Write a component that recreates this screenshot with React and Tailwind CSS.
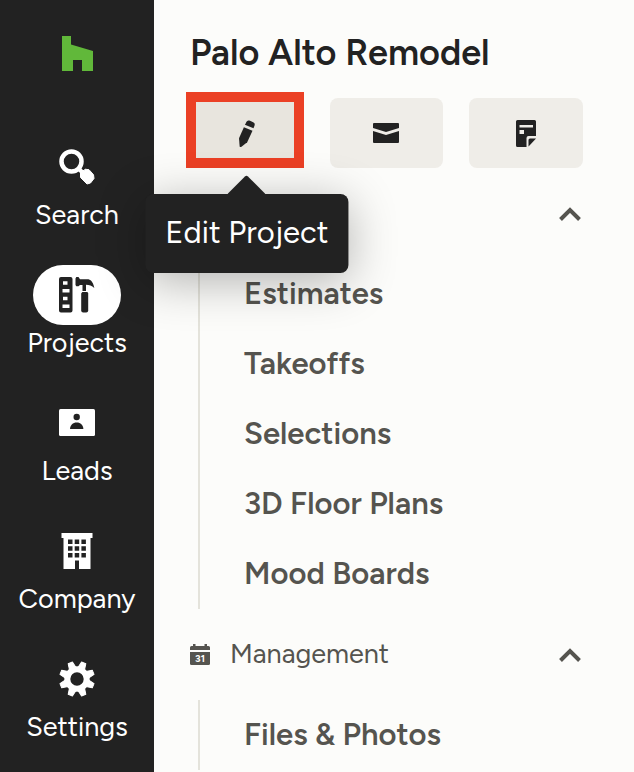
import clsx from 'clsx';

const LogoIcon = () => (
  <svg width="31" height="35" viewBox="0 0 31 35" fill="#61b83a" aria-hidden="true">
    <path d="M0 0h9v8.500l22 6.500V35H20V24h-9v11H0z" />
  </svg>
);

const SearchIcon = () => (
  <svg width="36" height="36" viewBox="0 0 36 36" aria-hidden="true">
    <circle cx="12.500" cy="12.500" r="10" fill="none" stroke="currentColor" strokeWidth="4.500" />
    <path d="M19.500 19.500l4 4" stroke="currentColor" strokeWidth="4" />
    <path
      d="M21.500 24l.5-2.500h3l1-1.300 4 .5 4.500 5 .5 3.800-3.500 4.500-3.500 1-6.500-6.500z"
      fill="currentColor"
      stroke="currentColor"
      strokeLinejoin="round"
    />
  </svg>
);

const ProjectsIcon = () => (
  <svg width="36" height="36" viewBox="0 0 36 36" fill="currentColor" aria-hidden="true">
    <path
      fillRule="evenodd"
      d="M2 0h9.500a2 2 0 0 1 2 2v31.500a2 2 0 0 1-2 2H2a2 2 0 0 1-2-2V2a2 2 0 0 1 2-2zM4 4.200v3.600h4.500V4.200zM3.500 12v3.500h7V12zM4 19.800v3.400h4.500v-3.400zM3.500 27.500v3.500h7v-3.500z"
    />
    <path d="M16.500 1.500l.8-1.500h2.200l1.500 2.200h8.500c3 .8 5 4 5.800 8.800-2.500-2-5-3.200-8.300-3.200V14h-3.500V8h-2.500l-1.500 1.200h-2.200l-.8-1.200z" />
    <path d="M23.300 15h5.200l.7 1.500v17a2 2 0 0 1-2 2h-3a2 2 0 0 1-2-2v-17z" />
  </svg>
);

const LeadsIcon = () => (
  <svg width="36" height="36" viewBox="0 0 36 36" aria-hidden="true">
    <rect y="4" width="36" height="27" rx="1.500" fill="currentColor" />
    <circle cx="17.700" cy="12" r="3.200" fill="#222222" />
    <path d="M11 24c.3-4 2.800-6.500 6.700-6.500s6.400 2.500 6.700 6.500z" fill="#222222" />
  </svg>
);

const CompanyIcon = () => (
  <svg width="36" height="36" viewBox="0 0 36 36" fill="currentColor" aria-hidden="true">
    <path
      fillRule="evenodd"
      d="M2.500 0h31v5h-2v31H20v-8.500h-4V36H4.500V5h-2zM9 6.500v4.500h4.500V6.500zM15.700 6.500v4.500h4.500V6.500zM22.400 6.500v4.500h4.500V6.500zM9 13.200v4.500h4.500v-4.500zM15.700 13.200v4.500h4.500v-4.500zM22.400 13.200v4.500h4.500v-4.500zM9 20v4.500h4.500V20zM15.700 20v4.500h4.500V20zM22.400 20v4.500h4.500V20z"
    />
  </svg>
);

const SettingsIcon = () => (
  <svg width="36" height="36" viewBox="-18 -18 36 36" aria-hidden="true">
    <circle r="9.700" fill="none" stroke="currentColor" strokeWidth="6" />
    <g fill="currentColor" stroke="currentColor" strokeLinejoin="round">
      {[22.5, 67.5, 112.5, 157.5, 202.5, 247.5, 292.5, 337.5].map((angle) => (
        <path key={angle} d="M-3.500-11l1.200-6.500h4.600L3.500-11z" transform={`rotate(${angle})`} />
      ))}
    </g>
  </svg>
);

const PencilIcon = () => (
  <svg width="26" height="28" viewBox="0 0 26 28" fill="currentColor" aria-hidden="true">
    <path d="M11.800 4.200c.9-2.500 2.200-3.200 4.200-2.400l2.700 1.100c2 .8 2.500 2 1.700 4l-.9 2.300-8.600-3.400z" />
    <path d="M9.900 8.200l8.600 3.500-5.300 11.500-6.300 5-1.200-.5-.7-8.500z" />
  </svg>
);

const MailIcon = () => (
  <svg width="26" height="20" viewBox="0 0 26 20" fill="currentColor" aria-hidden="true">
    <path d="M1 0h24a1 1 0 0 1 1 1v4L13 9 0 5V1a1 1 0 0 1 1-1z" />
    <path d="M0 8l13 4 13-4v11a1 1 0 0 1-1 1H1a1 1 0 0 1-1-1z" />
  </svg>
);

const NoteIcon = () => (
  <svg width="20" height="27" viewBox="0 0 20 27" fill="currentColor" aria-hidden="true">
    <path
      fillRule="evenodd"
      d="M1.500 0h17A1.500 1.500 0 0 1 20 1.500V16h-7.500a2 2 0 0 0-2 2v9h-9A1.500 1.500 0 0 1 0 25.500v-24A1.500 1.500 0 0 1 1.500 0zM3.500 5v2.500h13.500V5zM3.500 10v4H8v-4z"
    />
    <path d="M12.500 26.500V20a1.500 1.500 0 0 1 1.500-1.500h6z" />
  </svg>
);

const CalendarIcon = () => (
  <svg width="20" height="21" viewBox="0 0 20 21" fill="currentColor" aria-hidden="true">
    <path d="M1.500 2H3V0h2.500v2h9V0H17v2h1.500A1.500 1.500 0 0 1 20 3.500V6H0V3.500A1.500 1.500 0 0 1 1.500 2z" />
    <path d="M0 8h20v11.500a1.500 1.500 0 0 1-1.500 1.500h-17A1.500 1.500 0 0 1 0 19.500z" />
    <text x="10" y="18" textAnchor="middle" fontSize="10" fontWeight="700" fill="#fcfcfa">
      31
    </text>
  </svg>
);

const ChevronUpIcon = () => (
  <svg width="24" height="16" viewBox="0 0 24 16" fill="none" aria-hidden="true">
    <path d="M1.500 13.500l9.500-9.500 9.500 9.500" stroke="currentColor" strokeWidth="4" />
  </svg>
);

const navItems = [
  { label: 'Search', Icon: SearchIcon },
  { label: 'Projects', Icon: ProjectsIcon, active: true },
  { label: 'Leads', Icon: LeadsIcon },
  { label: 'Company', Icon: CompanyIcon },
  { label: 'Settings', Icon: SettingsIcon },
];

const planningLinks = ['Estimates', 'Takeoffs', 'Selections', '3D Floor Plans', 'Mood Boards'];
const managementLinks = ['Files & Photos'];

const Sidebar = () => (
  <nav className="flex w-[154px] shrink-0 flex-col items-center bg-[#222222] pt-9 text-white">
    <a href="#home" aria-label="Home">
      <LogoIcon />
    </a>
    <ul className="mt-[66px] flex flex-col gap-8">
      {navItems.map(({ label, Icon, active }) => (
        <li key={label}>
          <a href={`#${label.toLowerCase()}`} className="flex w-[118px] flex-col items-center">
            <span
              className={clsx(
                'flex h-[60px] w-[88px] items-center justify-center rounded-full',
                active && 'bg-white text-[#222222]'
              )}
            >
              <Icon />
            </span>
            <span className="text-[27px] leading-9">{label}</span>
          </a>
        </li>
      ))}
    </ul>
  </nav>
);

const ActionButton = ({ label, selected, children }) => (
  <button
    type="button"
    aria-label={label}
    className={clsx(
      'flex h-[70px] w-full items-center justify-center rounded-lg',
      selected ? 'bg-[#e8e5de]' : 'bg-[#efede8]'
    )}
  >
    {children}
  </button>
);

const Tooltip = ({ children }) => (
  <div
    role="tooltip"
    className="absolute top-24 left-1/2 z-10 flex h-[79px] -translate-x-1/2 items-center rounded-lg bg-[#222222] px-5 text-[31px] whitespace-nowrap text-white shadow-[0_8px_48px_rgba(0,0,0,0.3)]"
  >
    <svg
      width="38"
      height="19"
      viewBox="0 0 38 19"
      fill="#222222"
      className="absolute bottom-full left-1/2 -translate-x-1/2"
      aria-hidden="true"
    >
      <path d="M0 19L17.500 1.500q1.500-1.500 3 0L38 19z" />
    </svg>
    {children}
  </div>
);

const LinkList = ({ links }) => (
  <ul className="ml-2 border-l-2 border-[#e4e3db]">
    {links.map((link) => (
      <li key={link}>
        <a href="#section" className="flex h-[70px] items-center pl-11 text-[31px] font-semibold">
          {link}
        </a>
      </li>
    ))}
  </ul>
);

export default function App() {
  return (
    <div className="flex h-screen overflow-hidden bg-[#fcfcfa] font-['Figtree','Inter',sans-serif]">
      <Sidebar />
      <main className="min-w-0 flex-1 pt-2 pr-[51px] pl-9 text-[#55544f]">
        <h1 className="flex h-[90px] items-center text-[36px] font-semibold whitespace-nowrap text-[#222222]">
          Palo Alto Remodel
        </h1>

        <div className="grid grid-cols-3 gap-[26px] text-[#222222]">
          <div className="relative">
            <ActionButton label="Edit Project" selected>
              <PencilIcon />
            </ActionButton>
            <div className="pointer-events-none absolute -top-1.5 right-0 bottom-0 -left-1 border-10 border-[#eb4025]" />
            <Tooltip>Edit Project</Tooltip>
          </div>
          <ActionButton label="Messages">
            <MailIcon />
          </ActionButton>
          <ActionButton label="Notes">
            <NoteIcon />
          </ActionButton>
        </div>

        <section>
          <button type="button" aria-label="Collapse planning" className="flex h-[91px] w-full items-center justify-end">
            <ChevronUpIcon />
          </button>
          <LinkList links={planningLinks} />
        </section>

        <section>
          <button type="button" className="flex h-[91px] w-full items-center gap-5 text-[27px]">
            <CalendarIcon />
            Management
            <span className="ml-auto">
              <ChevronUpIcon />
            </span>
          </button>
          <LinkList links={managementLinks} />
        </section>
      </main>
    </div>
  );
}
